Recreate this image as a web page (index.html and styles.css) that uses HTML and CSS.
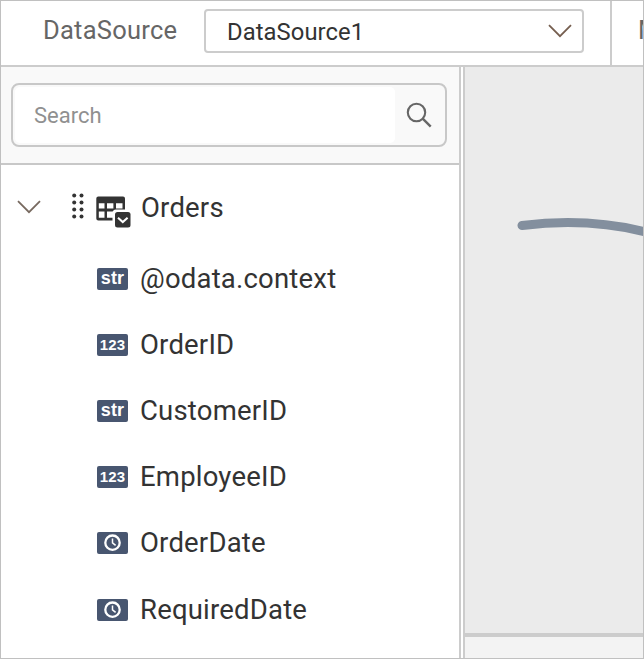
FILE: index.html
```html
<!DOCTYPE html>
<html lang="en">
<head>
<meta charset="utf-8">
<title>Data source designer</title>
<link rel="stylesheet" href="styles.css">
</head>
<body>
<svg class="defs" aria-hidden="true">
  <symbol id="chevron" viewBox="0 0 24 14"><path d="M1 1.2 12 12.2 23 1.2" fill="none" stroke="currentColor" stroke-width="1.8"/></symbol>
  <symbol id="clock" viewBox="0 0 18 18"><circle cx="8.5" cy="8.7" r="7.2" fill="none" stroke="#fff" stroke-width="2.3"/><path d="M8.5 4.6V8.9L11.6 11.4" fill="none" stroke="#fff" stroke-width="1.5"/></symbol>
</svg>
<div class="window">
  <header class="toolbar">
    <div class="source">
      <span class="label">DataSource</span>
      <div class="select"><span>DataSource1</span><svg class="chevron"><use href="#chevron"/></svg></div>
    </div>
    <span class="next">M</span>
  </header>
  <main class="body">
    <aside class="panel">
      <div class="search-bar">
        <div class="search">
          <div class="search-input">Search</div>
          <div class="search-button">
            <svg width="26" height="26" viewBox="0 0 26 26" fill="none" stroke="#666" stroke-width="2.1"><circle cx="10.5" cy="10.5" r="8.7"/><path d="M16.7 16.7 24.7 24.7" stroke-width="2.4"/></svg>
          </div>
        </div>
      </div>
      <div class="table-row">
        <svg class="chevron"><use href="#chevron"/></svg>
        <svg class="grip" width="12" height="26" viewBox="0 0 12 26" fill="#333"><circle cx="2.2" cy="2.5" r="2"/><circle cx="9.5" cy="2.5" r="2"/><circle cx="2.2" cy="9.5" r="2"/><circle cx="9.5" cy="9.5" r="2"/><circle cx="2.2" cy="16.5" r="2"/><circle cx="9.5" cy="16.5" r="2"/><circle cx="2.2" cy="23.5" r="2"/><circle cx="9.5" cy="23.5" r="2"/></svg>
        <svg class="table-icon" width="36" height="32" viewBox="0 0 36 32"><path fill="#333" fill-rule="evenodd" d="M2.3.5H27Q29 .5 29 2.5V24.4H2.3Q.3 24.4.3 22.4V2.5Q.3.5 2.3.5ZM2.8 7.2V12.5H8.5V7.2ZM11 7.2V12.5H17.4V7.2ZM20 7.2V12.5H26.5V7.2ZM2.8 15.6V21.8H8.5V15.6ZM11 15.6V21.8H17.4V15.6Z"/><path fill="#fff" d="M16.5 26V17Q16.5 13.5 20 13.5H32V27H16.5Z"/><rect x="19" y="16" width="15.5" height="15.5" rx="2.5" fill="#333"/><path d="m22 21.7 4.8 4.4 4.8-4.4" fill="none" stroke="#fff" stroke-width="2"/></svg>
        <span class="table-name">Orders</span>
      </div>
      <ul class="fields">
        <li><b class="type str">str</b><span>@odata.context</span></li>
        <li><b class="type">123</b><span>OrderID</span></li>
        <li><b class="type str">str</b><span>CustomerID</span></li>
        <li><b class="type">123</b><span>EmployeeID</span></li>
        <li><b class="type"><svg width="18" height="18"><use href="#clock"/></svg></b><span>OrderDate</span></li>
        <li><b class="type"><svg width="18" height="18"><use href="#clock"/></svg></b><span>RequiredDate</span></li>
      </ul>
    </aside>
    <section class="workspace">
      <div class="canvas">
        <svg width="178" height="50" viewBox="0 0 178 50"><path d="M57 25.5Q124 17 185 33" fill="none" stroke="#838f9e" stroke-width="9" stroke-linecap="round"/></svg>
      </div>
      <div class="footer"></div>
    </section>
  </main>
</div>
</body>
</html>
```
FILE: styles.css
```css
* { box-sizing: border-box; }
body { margin: 0; font-family: Roboto, "Liberation Sans", sans-serif; color: #333; }
svg { display: block; flex: none; }
.defs { position: absolute; width: 0; height: 0; }
.window { width: 644px; height: 659px; border: 1px solid #c0c0c0; background: #fff; overflow: hidden; display: flex; flex-direction: column; }
.toolbar { height: 66px; flex: none; display: flex; border-bottom: 2px solid #ccc; overflow: hidden; }
.source { width: 611px; flex: none; border-right: 2px solid #ccc; display: flex; padding: 8px 0 0 42px; }
.label { width: 161px; color: #666; font-size: 25.5px; line-height: 42px; letter-spacing: .25px; }
.select { width: 380px; height: 44px; border: 2px solid #ccc; border-radius: 4px; display: flex; justify-content: space-between; align-items: center; padding: 0 10px 0 21px; font-size: 23.8px; }
.select span { padding-top: 2px; letter-spacing: .07px; }
.chevron { width: 24px; height: 14px; color: #666; }
.select .chevron { color: #765f50; }
.table-row .chevron { color: #786a60; }
.next { padding: 8px 0 0 26px; font-size: 25.5px; line-height: 42px; color: #666; }
.body { flex: 1; display: flex; min-height: 0; }
.panel { width: 460px; flex: none; border-right: 2px solid #ccc; }
.search-bar { height: 98px; background: #f9f9f9; border-bottom: 2px solid #c8c8c8; padding: 16px 10px; }
.search { width: 436px; height: 64px; border: 2px solid #c8c8c8; border-radius: 8px; display: flex; padding: 2px; }
.search-input { width: 380px; background: #fff; border-radius: 5px; padding-left: 19px; color: #909090; font-size: 22px; line-height: 57px; }
.search-button { flex: 1; display: flex; align-items: center; padding: 0 0 1px 11px; }
.table-row { height: 80px; display: flex; align-items: center; padding: 4px 0 0 16px; font-size: 27.5px; letter-spacing: .2px; }
.table-name { padding-top: 1px; }
.grip { margin: -2px 12px 0 31px; }
.table-icon { margin: 9px 9px 0 0; }
.fields { list-style: none; margin: 0; padding: 0; }
.fields li { height: 66.2px; display: flex; align-items: center; padding-left: 96px; font-size: 27.5px; letter-spacing: .2px; }
.type { width: 31px; height: 22px; margin: 1px 12px 0 0; background: #485670; color: #fff; border-radius: 2px; display: flex; justify-content: center; align-items: center; font: bold 15px/22px "Liberation Sans", sans-serif; }
.str { font-size: 18px; line-height: 20px; padding-bottom: 1px; }
.workspace { flex: 1; margin-left: 2px; border-left: 2px solid #ccc; display: flex; flex-direction: column; min-width: 0; }
.canvas { height: 566px; background: #ebebeb; padding-top: 133px; overflow: hidden; }
.footer { flex: 1; border-top: 4px solid #ccc; background: #f3f3f3; }
```
